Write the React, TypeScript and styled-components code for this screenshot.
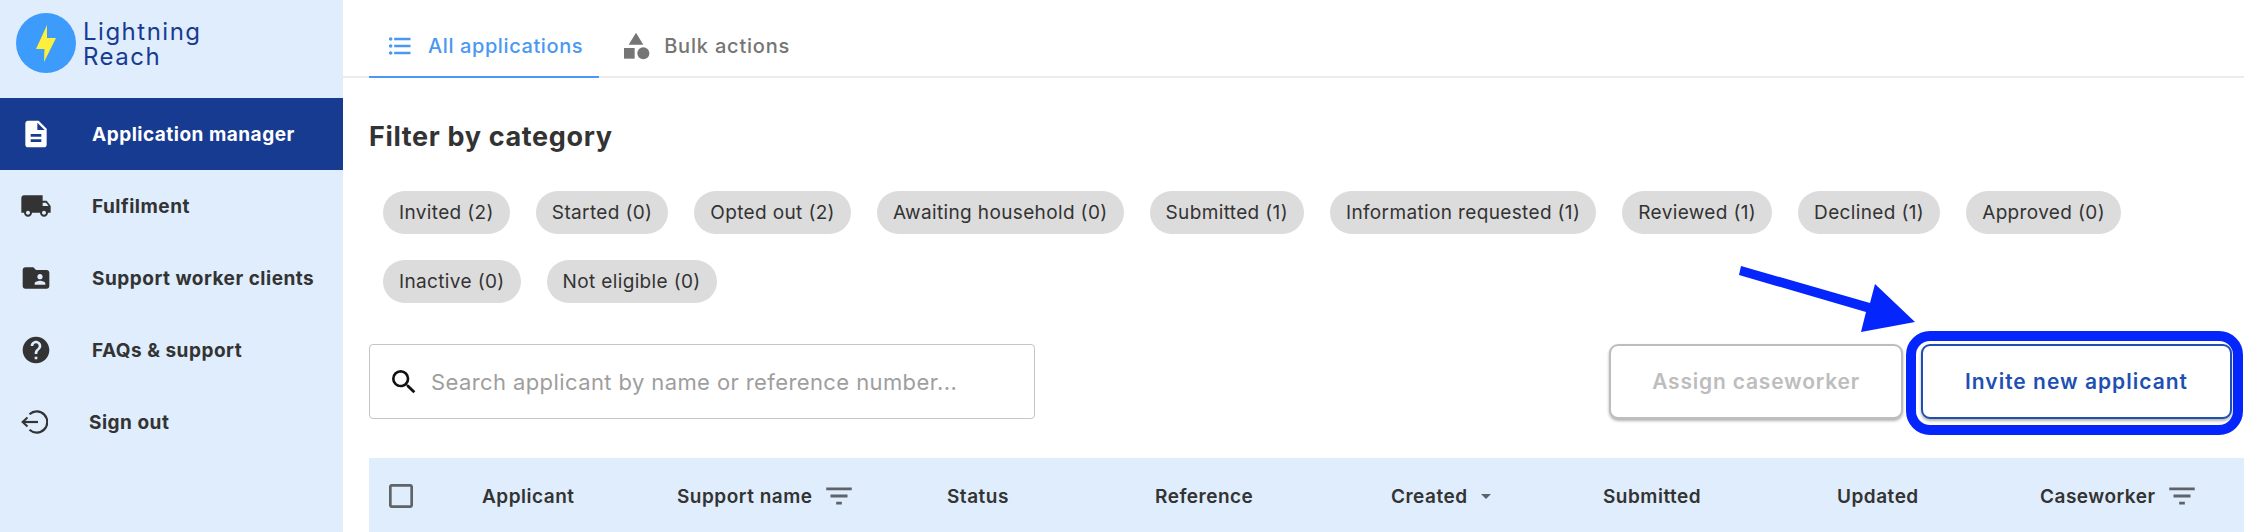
import React from 'react';
import styled, {createGlobalStyle} from 'styled-components';
import {
    MdArrowDropDown,
    MdCategory,
    MdCheckBoxOutlineBlank,
    MdDescription,
    MdFilterList,
    MdFolderShared,
    MdFormatListBulleted,
    MdHelp,
    MdLocalShipping,
    MdSearch,
} from 'react-icons/md';

const chips = [
    'Invited (2)', 'Started (0)', 'Opted out (2)', 'Awaiting household (0)', 'Submitted (1)',
    'Information requested (1)', 'Reviewed (1)', 'Declined (1)', 'Approved (0)', 'Inactive (0)', 'Not eligible (0)',
];

const SignOutIcon = () => (
    <svg width="28" height="26" viewBox="0 0 28 26" fill="none" stroke="#333" strokeWidth="2.2">
        <path d="M9.5 5.2A10.6 10.6 0 1 1 9.5 20.8"/>
        <path d="M18 13H3.5"/>
        <path d="M7.5 8.6L2.6 13l4.9 4.4" strokeWidth="2"/>
    </svg>
);

const Bolt = () => (
    <svg width="60" height="60" viewBox="0 0 60 60">
        <circle cx="30" cy="30" r="30" fill="#3d9bfb"/>
        <path d="M31 12L20 36h8.5L28 49l12-24h-9z" fill="#fdf03c"/>
    </svg>
);

export default function App() {
    return (
        <Page>
            <GlobalStyle/>
            <Sidebar>
                <Logo>
                    <Bolt/>
                    <LogoText>Lightning<br/>Reach</LogoText>
                </Logo>
                <NavItem $active><MdDescription size={32}/><NavLabel>Application manager</NavLabel></NavItem>
                <NavItem><MdLocalShipping size={32}/><NavLabel>Fulfilment</NavLabel></NavItem>
                <NavItem><MdFolderShared size={32}/><NavLabel>Support worker clients</NavLabel></NavItem>
                <NavItem><MdHelp size={32}/><NavLabel>FAQs &amp; support</NavLabel></NavItem>
                <NavItem><SignOutIcon/><NavLabel $tight>Sign out</NavLabel></NavItem>
            </Sidebar>
            <Main>
                <Tabs>
                    <Tab $active><MdFormatListBulleted size={28}/>All applications</Tab>
                    <Tab><MdCategory size={32}/>Bulk actions</Tab>
                </Tabs>
                <Title>Filter by category</Title>
                <Chips>
                    {chips.map(c => <Chip key={c}>{c}</Chip>)}
                </Chips>
                <Toolbar>
                    <Search>
                        <MdSearch size={32} color="#111"/>
                        <Placeholder>Search applicant by name or reference number...</Placeholder>
                    </Search>
                    <Buttons>
                        <AssignButton>Assign caseworker</AssignButton>
                        <InviteButton>Invite new applicant</InviteButton>
                    </Buttons>
                    <Arrow width="190" height="75" viewBox="0 0 190 75">
                        <path d="M2 0L131 37L136 18L176 56L122 66L127 46L0 9z" fill="#0425fb"/>
                    </Arrow>
                </Toolbar>
                <TableHead>
                    <MdCheckBoxOutlineBlank size={32} color="#5f6368"/>
                    <HeadCell>Applicant</HeadCell>
                    <HeadCell>Support name<FilterIcon size={34}/></HeadCell>
                    <HeadCell>Status</HeadCell>
                    <HeadCell>Reference</HeadCell>
                    <HeadCell>Created<SortIcon size={24}/></HeadCell>
                    <HeadCell>Submitted</HeadCell>
                    <HeadCell>Updated</HeadCell>
                    <HeadCell>Caseworker<FilterIcon size={34}/></HeadCell>
                </TableHead>
            </Main>
        </Page>
    );
}

const GlobalStyle = createGlobalStyle`
    html, body {
        margin: 0;
        padding: 0;
        background: #fff;
        font-family: Inter, "Noto Sans", sans-serif;
        overflow: hidden;
    }
`

const Page = styled.div`
    display: flex;
    width: 2244px;
    height: 532px;
    overflow: hidden;
    color: #333;
`

const Sidebar = styled.aside`
    width: 343px;
    flex-shrink: 0;
    background: #dfedfc;
`

const Logo = styled.div`
    height: 98px;
    box-sizing: border-box;
    padding: 13px 0 0 16px;
    display: flex;
    gap: 7px;
`

const LogoText = styled.div`
    color: #183b92;
    font-size: 24px;
    line-height: 25px;
    letter-spacing: 1.5px;
    padding-top: 6px;
`

const NavItem = styled.div<{ $active?: boolean }>`
    height: 72px;
    box-sizing: border-box;
    padding-left: 20px;
    display: flex;
    align-items: center;
    background: ${p => p.$active ? '#183b92' : 'transparent'};
    color: ${p => p.$active ? '#fff' : '#333'};
`

const NavLabel = styled.span<{ $tight?: boolean }>`
    margin-left: ${p => p.$tight ? 41 : 40}px;
    font-size: 19px;
    font-weight: 700;
    letter-spacing: 0.5px;
`

const Main = styled.main`
    flex: 1;
    min-width: 0;
    padding-left: 26px;
    display: flex;
    flex-direction: column;
    align-items: stretch;
`

const Tabs = styled.div`
    height: 78px;
    box-sizing: border-box;
    margin-left: -26px;
    padding-left: 26px;
    border-bottom: 2px solid #ececec;
    display: flex;
`

const Tab = styled.div<{ $active?: boolean }>`
    height: 78px;
    box-sizing: border-box;
    padding: 15px 16px 0 ${p => p.$active ? 17 : 21}px;
    padding-right: ${p => p.$active ? 16 : 16}px;
    display: flex;
    align-items: center;
    gap: ${p => p.$active ? 14 : 12}px;
    font-size: 20px;
    font-weight: 500;
    letter-spacing: ${p => p.$active ? 0.6 : 0.8}px;
    color: ${p => p.$active ? '#4a98f2' : '#757575'};
    border-bottom: 2px solid ${p => p.$active ? '#4a98f2' : 'transparent'};
`

const Title = styled.h2`
    margin: 42px 0 0;
    font-size: 27px;
    line-height: 34px;
    font-weight: 700;
    letter-spacing: 0.65px;
`

const Chips = styled.div`
    margin-top: 37px;
    padding-left: 14px;
    display: flex;
    flex-wrap: wrap;
    gap: 26px;
`

const Chip = styled.div`
    height: 43px;
    padding: 0 16px;
    border-radius: 22px;
    background: #dcdcdc;
    font-size: 19px;
    letter-spacing: 0.36px;
    line-height: 43px;
`

const Toolbar = styled.div`
    position: relative;
    margin-top: 41px;
    padding-right: 12px;
    display: flex;
    justify-content: space-between;
`

const Search = styled.div`
    width: 666px;
    height: 75px;
    box-sizing: border-box;
    padding-left: 18px;
    border: 1px solid #c4c4c4;
    border-radius: 4px;
    display: flex;
    align-items: center;
    gap: 11px;
`

const Placeholder = styled.span`
    color: #9e9e9e;
    font-size: 22px;
    letter-spacing: 0.4px;
`

const Buttons = styled.div`
    display: flex;
    gap: 18px;
`

const AssignButton = styled.button`
    width: 294px;
    height: 75px;
    background: #fff;
    border: 2px solid #bdbdbd;
    border-radius: 9px;
    box-shadow: 0 2px 3px rgba(0, 0, 0, .3);
    color: #bdbdbd;
    font: 600 21px Inter, sans-serif;
    letter-spacing: 0.8px;
`

const InviteButton = styled.button`
    position: relative;
    width: 311px;
    height: 75px;
    background: #fff;
    border: 2px solid #1e50b4;
    border-radius: 9px;
    box-shadow: 0 2px 3px rgba(0, 0, 0, .3);
    color: #1e50b4;
    font: 600 21px Inter, sans-serif;
    letter-spacing: 1px;

    &::after {
        content: '';
        position: absolute;
        left: -17px;
        right: -13px;
        top: -15px;
        bottom: -18px;
        border: 10px solid #0425fb;
        border-radius: 24px;
    }
`

const Arrow = styled.svg`
    position: absolute;
    left: 1370px;
    top: -78px;
`

const TableHead = styled.div`
    margin-top: 39px;
    flex: 1;
    padding-top: 22px;
    box-sizing: border-box;
    background: #dfedfc;
    display: grid;
    grid-template-columns: 113px 195px 270px 208px 236px 212px 234px 203px 1fr;
    align-items: start;
    color: #333;

    & > svg {
        margin-left: 16px;
    }
`

const HeadCell = styled.div`
    display: flex;
    align-items: center;
    height: 32px;
    font-size: 19px;
    font-weight: 600;
    letter-spacing: 0.5px;
`

const FilterIcon = styled(MdFilterList)`
    margin-left: 9px;
    color: #5f6368;
`

const SortIcon = styled(MdArrowDropDown)`
    margin-left: 6px;
    color: #5f6368;
`
